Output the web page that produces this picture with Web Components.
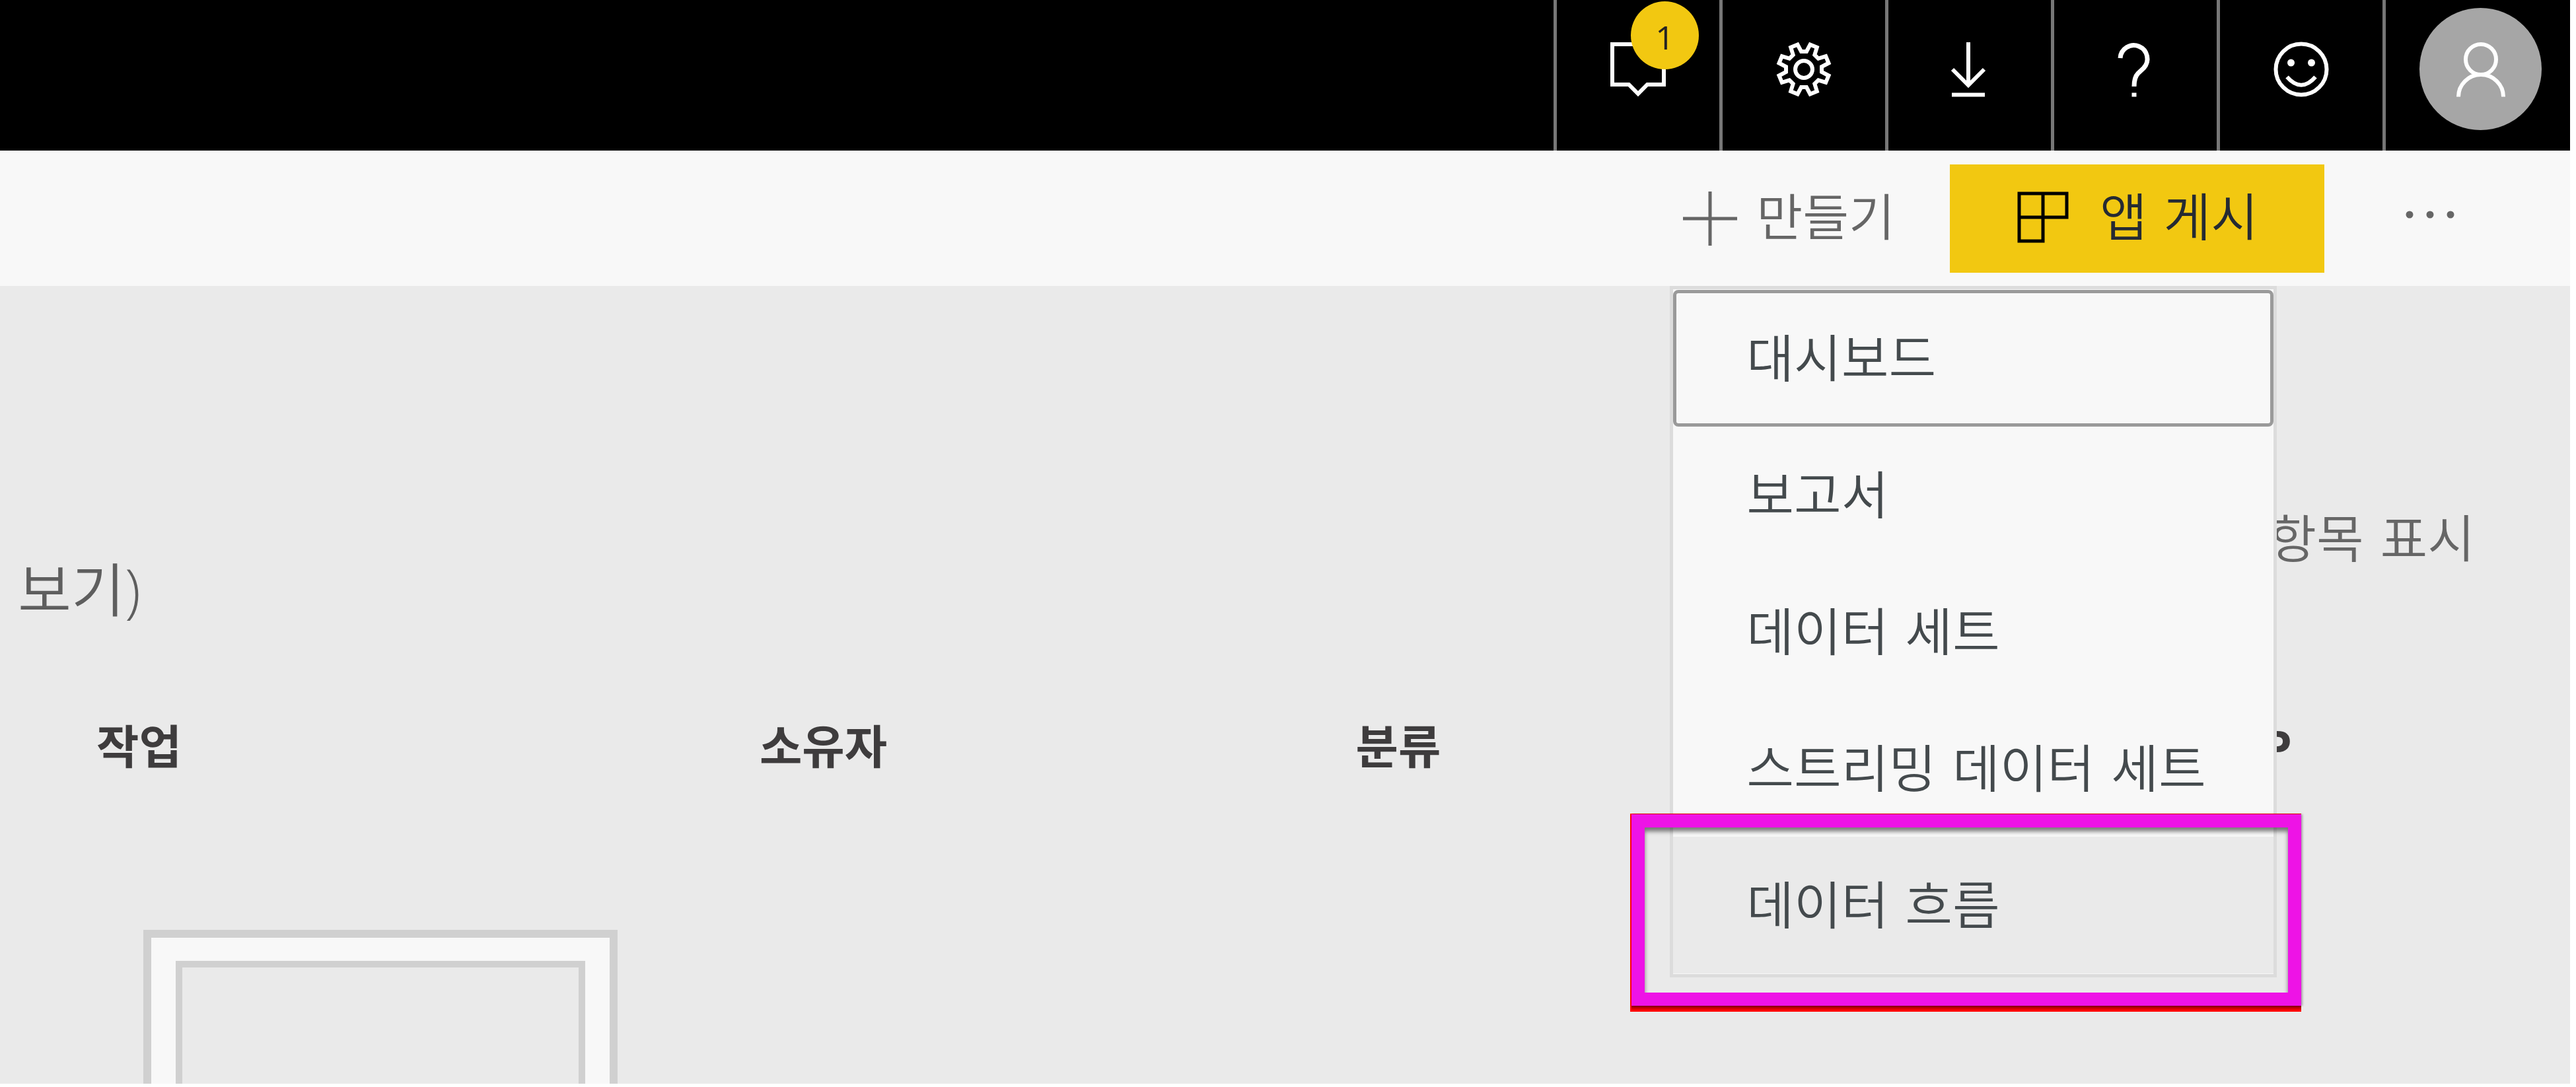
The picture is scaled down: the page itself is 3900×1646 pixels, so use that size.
<!DOCTYPE html>
<html lang="ko">
<head>
<meta charset="utf-8">
<title>Power BI</title>
<style>
  html, body { margin: 0; height: 100%; background: #fff; }
  body { font-family: "Open Sans", "Noto Sans CJK KR", sans-serif; font-weight: 350;
    --label-font: "DejaVu Sans", "Noto Sans CJK KR", sans-serif; }
</style>
</head>
<body>
<pbi-workspace></pbi-workspace>

<script>
const define = (name, markup) => {
  const template = document.createElement('template');
  template.innerHTML = markup;
  customElements.define(name, class extends HTMLElement {
    constructor() {
      super();
      this.attachShadow({ mode: 'open' }).append(template.content.cloneNode(true));
    }
  });
};

/* Line icons, all drawn around the origin. */
const ICONS = {
  chat: '<path d="M-39 -38H39V23H14L0 37L-14 23H-39Z"/>',
  gear: '<path d="M-4 -27L4 -27L9.500 -37.500L19.800 -33.200L16.300 -21.900L21.900 -16.300L33.200 -19.800L37.500 -9.500L27 -4L27 4L37.500 9.500L33.200 19.800L21.900 16.300L16.300 21.900L19.800 33.200L9.500 37.500L4 27L-4 27L-9.500 37.500L-19.800 33.200L-16.300 21.900L-21.900 16.300L-33.200 19.800L-37.500 9.500L-27 4L-27 -4L-37.500 -9.500L-33.200 -19.800L-21.900 -16.300L-16.300 -21.900L-19.800 -33.200L-9.500 -37.500Z"/><circle r="13"/>',
  download: '<path d="M-2 -41V25M-26 0L-2 24L22 0M-27 38.500H23"/>',
  help: '<path d="M-23 -17A20.500 20.500 0 1 1 12.500 -2L4 6Q-2 12 -2 26M-2 35.500V41.500" stroke-width="7"/>',
  smile: '<circle r="38.500"/><path d="M-21.500 11.500Q0 36 21.500 11.500"/><g fill="currentColor" stroke="none"><circle cx="-15.500" cy="-10" r="5.500"/><circle cx="15.500" cy="-10" r="5.500"/></g>',
  person: '<circle cy="-15" r="23"/><path d="M-34 41.500A34 33.500 0 0 1 34 41.500"/>',
  plus: '<path d="M0 -41V41M-41 0H41" stroke-width="5"/>',
  app: '<path d="M-36 -38H36V-2H-36ZM0 -38V34H-36V-38" stroke="#000" stroke-width="5"/>',
  more: '<g fill="currentColor" stroke="none"><circle cx="-31" r="5.500"/><circle r="5.500"/><circle cx="31" r="5.500"/></g>'
};

customElements.define('pbi-icon', class extends HTMLElement {
  constructor() {
    super();
    this.attachShadow({ mode: 'open' }).innerHTML = `
      <style>
        :host { display: block; flex: none; width: 92px; height: 92px; }
        svg { display: block; width: 100%; height: 100%; }
      </style>
      <svg viewBox="-46 -46 92 92" fill="none" stroke="currentColor" stroke-width="6" aria-hidden="true">
        ${ICONS[this.getAttribute('name')] || ''}
      </svg>`;
  }
});

define('pbi-header-button', `
  <style>
    :host { display: block; flex: none; width: 251px; box-sizing: border-box; border-left: 5px solid #777; }
    button { display: flex; align-items: center; justify-content: center; width: 100%; height: 100%;
      margin: 0; padding: 0 0 19px; border: 0; background: none; color: #fff; font: inherit; }
    .glyph { position: relative; }
    ::slotted([slot=badge]) { position: absolute; left: 35px; top: -57px; width: 103px; height: 103px; border-radius: 50%;
      background: #f2c811; color: #252423; font: 400 50px/108px "Open Sans", "Noto Sans", sans-serif; text-align: center; }
  </style>
  <button type="button"><span class="glyph"><slot></slot><slot name="badge"></slot></span></button>`);

define('pbi-header', `
  <style>
    :host { display: flex; justify-content: flex-end; height: 228px; background: #000; flex: none; }
    .account { display: flex; justify-content: flex-end; width: 284px; box-sizing: border-box;
      border-left: 5px solid #777; padding: 12px 43px 0 0; }
    .account button { display: flex; align-items: center; justify-content: center; width: 185px; height: 185px;
      margin: 0; padding: 0; border: 0; border-radius: 50%; background: #a6a6a6; color: #fff; }
  </style>
  <pbi-header-button aria-label="알림"><pbi-icon name="chat"></pbi-icon><span slot="badge">1</span></pbi-header-button>
  <pbi-header-button aria-label="설정"><pbi-icon name="gear"></pbi-icon></pbi-header-button>
  <pbi-header-button aria-label="다운로드"><pbi-icon name="download"></pbi-icon></pbi-header-button>
  <pbi-header-button aria-label="도움말"><pbi-icon name="help"></pbi-icon></pbi-header-button>
  <pbi-header-button aria-label="피드백"><pbi-icon name="smile"></pbi-icon></pbi-header-button>
  <div class="account"><button type="button" aria-label="계정"><pbi-icon name="person"></pbi-icon></button></div>`);

define('pbi-menu-item', `
  <style>
    :host { display: block; }
    button { display: flex; align-items: center; width: 100%; height: 207px; box-sizing: border-box; margin: 0;
      padding: 6px 0 0 111px; border: 0; background: #f8f8f8; color: #444a4d; font: inherit; font-family: var(--label-font); font-size: 78px;
      line-height: 104px; text-align: left; white-space: nowrap; }
    :host([focused]) button { outline: 5px solid #9a9a9a; outline-offset: -5px; border-radius: 8px; }
    :host([hovered]) button { background: #eaeaea; }
  </style>
  <button type="button" role="menuitem"><slot></slot></button>`);

define('pbi-callout', `
  <style>
    :host { position: absolute; left: -65px; right: -42px; bottom: -57px; height: 300px; box-sizing: border-box;
      padding: 1px 0 9px 2px; background: linear-gradient(#f00, #f00) top / 100% 1px no-repeat,
        linear-gradient(#f00, #f00) left / 2px 100% no-repeat,
        linear-gradient(#8b0000, #f00 7px) bottom / 100% 9px no-repeat; pointer-events: none; }
    div { height: 100%; box-sizing: border-box; border: 20px solid #ee13e6;
      box-shadow: inset 0 6px 6px rgba(0,0,0,.5), 2px 0 3px rgba(0,0,0,.3); }
  </style>
  <div></div>`);

define('pbi-create-menu', `
  <style>
    :host { position: absolute; z-index: 1; top: 154px; left: -15px; width: 919px; box-sizing: border-box;
      padding: 1px 0; border: 5px solid #dcdcdc; background: #f8f8f8; }
  </style>
  <div role="menu">
    <pbi-menu-item focused>대시보드</pbi-menu-item>
    <pbi-menu-item>보고서</pbi-menu-item>
    <pbi-menu-item>데이터 세트</pbi-menu-item>
    <pbi-menu-item>스트리밍 데이터 세트</pbi-menu-item>
    <pbi-menu-item hovered>데이터 흐름</pbi-menu-item>
  </div>
  <pbi-callout></pbi-callout>`);

define('pbi-toolbar', `
  <style>
    :host { display: flex; align-items: center; justify-content: flex-end; flex: none; height: 205px;
      box-sizing: border-box; padding-right: 166px; background: #f8f8f8; }
    button { display: flex; align-items: center; margin: 0; padding: 0; border: 0; background: none;
      font: inherit; font-family: var(--label-font); font-size: 78px; line-height: 104px; white-space: nowrap; }
    .create { position: relative; margin-right: 83px; }
    .create > button { gap: 24px; color: #666; font-size: 76px; }
    .publish { width: 567px; height: 164px; gap: 40px; padding-left: 95px; background: #f2c811; color: #252a33; margin-right: 114px; }
    .more { color: #666; padding-bottom: 12px; }
  </style>
  <div class="create">
    <button type="button" aria-haspopup="menu" aria-expanded="true"><pbi-icon name="plus"></pbi-icon><span>만들기</span></button>
    <pbi-create-menu></pbi-create-menu>
  </div>
  <button type="button" class="publish"><pbi-icon name="app"></pbi-icon><span>앱 게시</span></button>
  <button type="button" class="more" aria-label="추가 옵션"><pbi-icon name="more"></pbi-icon></button>`);

define('pbi-content', `
  <style>
    :host { display: flex; flex-direction: column; flex: 1; min-height: 0; overflow: hidden; background: #eaeaea; }
    .heading { display: flex; justify-content: space-between; align-items: flex-start; padding: 325px 144px 0 27px; color: #5e5e5e; }
    h1 { margin: 74px 0 0; font-size: 88px; line-height: 120px; font-weight: inherit; }
    .shown { margin: 0; font-family: var(--label-font); font-size: 78px; line-height: 120px; color: #666; }
    table { width: 100%; margin-top: 118px; border-collapse: collapse; table-layout: fixed; }
    th { padding: 0 0 0 146px; font-size: 70px; line-height: 120px; font-weight: 700; text-align: left; color: #3e3c3d; }
    .frame { flex: 1; width: 718px; box-sizing: border-box; margin: 218px 0 0 217px; border: 12px solid #d0d0d0;
      border-bottom: 0; background: #f8f8f8; padding: 35px 37px 0; }
    .frame div { height: 100%; box-sizing: border-box; border: 10px solid #d0d0d0; border-bottom: 0; background: #eaeaea; }
  </style>
  <div class="heading"><h1>보기)</h1><p class="shown">항목 표시</p></div>
  <table>
    <colgroup><col style="width:25.8%"><col style="width:23.2%"><col style="width:35.3%"><col></colgroup>
    <thead><tr><th>작업</th><th>소유자</th><th>분류</th><th>P</th></tr></thead>
  </table>
  <div class="frame"><div></div></div>`);

define('pbi-workspace', `
  <style>
    :host { display: flex; flex-direction: column; min-height: 100vh; height: 100vh; box-sizing: border-box; padding: 0 9px 5px 0; }
  </style>
  <pbi-header></pbi-header>
  <pbi-toolbar></pbi-toolbar>
  <pbi-content></pbi-content>`);
</script>
</body>
</html>
